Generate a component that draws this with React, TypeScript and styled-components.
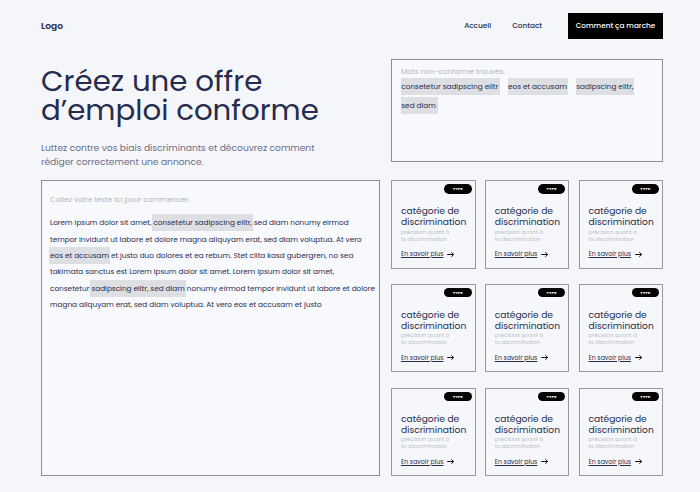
import React from 'react';
import styled, { createGlobalStyle } from 'styled-components';

const GlobalStyle = createGlobalStyle`
  *, *::before, *::after { box-sizing: border-box; }
  body {
    margin: 0;
    background: #f5f6fa;
    color: #262c4d;
    font-family: Poppins, Inter, 'Liberation Sans', sans-serif;
    font-feature-settings: 'cv11' 1;
    font-size: 7.32px;
  }
  h1, h2, p { margin: 0; font-weight: 400; }
`;

const Page = styled.div`
  width: 700px;
  height: 492px;
  padding: 13px 37px 0 41px;
  overflow: hidden;
`;

const Header = styled.header`
  display: flex;
  align-items: center;
  justify-content: space-between;
  height: 26px;
`;

const Logo = styled.div`
  font-size: 9.15px;
  font-weight: 600;
`;

const Nav = styled.nav`
  display: flex;
  align-items: center;
`;

const NavLink = styled.a<{ $gap: number }>`
  margin-right: ${(p) => p.$gap}px;
  font-weight: 500;
`;

const NavButton = styled.button`
  width: 95px;
  height: 26px;
  padding: 0;
  border: 0;
  background: #000;
  color: #fff;
  font: inherit;
  font-weight: 500;
`;

const Columns = styled.main`
  display: grid;
  grid-template-columns: 339px 272px;
  grid-template-rows: 121px 296px;
  column-gap: 11px;
  margin-top: 20px;
`;

const Intro = styled.section`
  padding-top: 6.5px;
`;

const Title = styled.h1`
  font-size: 29.25px;
  line-height: 29.5px;
`;

const Line = styled.span`
  display: block;
  white-space: pre;
`;

const Lead = styled.p`
  margin-top: 16px;
  color: #6b6f88;
  font-size: 9.14px;
  line-height: 14px;
`;

const Panel = styled.section`
  border: 1px solid #8d8e93;
  background: #f8f9fd;
`;

const Findings = styled(Panel)`
  height: 103px;
  padding: 7px 9px;
`;

const Hint = styled.p`
  color: #b2b4bf;
  line-height: 10px;
`;

const Chips = styled.div`
  display: flex;
  flex-wrap: wrap;
  gap: 2px 8px;
  margin-top: 1px;
`;

const Chip = styled.span<{ $width: number }>`
  width: ${(p) => p.$width}px;
  height: 17px;
  padding-left: 0.3px;
  background: #dedfe3;
  line-height: 17px;
  white-space: pre;
`;

const Editor = styled(Panel)`
  padding: 14px 0 0 8px;
`;

const Draft = styled.div`
  margin-top: 10.2px;
  line-height: 16.4px;
`;

const Mark = styled.mark`
  margin: 0 -1px;
  padding: 3px 1px;
  background: #dedfe3;
  color: inherit;
`;

const Cards = styled.section`
  display: grid;
  grid-template-columns: repeat(3, 84.5px);
  grid-template-rows: repeat(3, 88.5px);
  justify-content: space-between;
  align-content: space-between;
`;

const Card = styled.article`
  display: flex;
  flex-direction: column;
  padding: 3px 3px 0 9px;
  border: 1px solid #97989e;
  background: #f6f7fb;
`;

const Tag = styled.span`
  align-self: flex-end;
  width: 27.5px;
  height: 9.5px;
  border-radius: 5px;
  background: #000;
  color: #fff;
  font-size: 4.1px;
  font-weight: 700;
  line-height: 9.5px;
  text-align: center;
`;

const CardTitle = styled.h2`
  margin-top: 11.5px;
  font-size: 9.14px;
  line-height: 11px;
`;

const CardText = styled.p`
  margin-top: 1.5px;
  color: #bcbec8;
  font-size: 5.5px;
  line-height: 7px;
`;

const More = styled.a`
  display: flex;
  align-items: center;
  gap: 3.8px;
  margin-top: 6.5px;
  font-size: 6.25px;
  line-height: 10px;
  white-space: nowrap;
`;

const MoreLabel = styled.span`
  text-decoration: underline;
  text-decoration-thickness: 0.6px;
  text-underline-offset: 1px;
`;

const Arrow = () => (
  <svg width="8" height="7" viewBox="0 0 8 7" fill="none" stroke="#111" strokeWidth="1">
    <path d="M0.2 3.5H6.7M4.3 1.2L6.7 3.5L4.3 5.8" />
  </svg>
);

const chips = [
  { text: 'consetetur sadipscing elitr', width: 98.7 },
  { text: 'eos et accusam', width: 60.3 },
  { text: 'sadipscing elitr,', width: 58.5 },
  { text: 'sed diam', width: 37 },
];

export default function App() {
  return (
    <>
      <GlobalStyle />
      <Page>
        <Header>
          <Logo>Logo</Logo>
          <Nav>
            <NavLink $gap={21}>Accueil</NavLink>
            <NavLink $gap={26}>Contact</NavLink>
            <NavButton>Comment ça marche</NavButton>
          </Nav>
        </Header>
        <Columns>
          <Intro>
            <Title>
              <Line>Créez une offre</Line>
              <Line>d’emploi conforme</Line>
            </Title>
            <Lead>
              <Line>Luttez contre vos biais discriminants et découvrez comment</Line>
              <Line>rédiger correctement une annonce.</Line>
            </Lead>
          </Intro>
          <Findings>
            <Hint>Mots non-conforme trouvés:</Hint>
            <Chips>
              {chips.map((c) => (
                <Chip key={c.text} $width={c.width}>{c.text}</Chip>
              ))}
            </Chips>
          </Findings>
          <Editor>
            <Hint>Collez votre texte ici pour commencer.</Hint>
            <Draft>
              <Line>Lorem ipsum dolor sit amet, <Mark>consetetur sadipscing elitr,</Mark> sed diam nonumy eirmod</Line>
              <Line>tempor invidunt ut labore et dolore magna aliquyam erat, sed diam voluptua. At vero</Line>
              <Line><Mark>eos et accusam</Mark> et justo duo dolores et ea rebum. Stet clita kasd gubergren, no sea</Line>
              <Line>takimata sanctus est Lorem ipsum dolor sit amet. Lorem ipsum dolor sit amet,</Line>
              <Line>consetetur <Mark>sadipscing elitr, sed diam</Mark> nonumy eirmod tempor invidunt ut labore et dolore</Line>
              <Line>magna aliquyam erat, sed diam voluptua. At vero eos et accusam et justo</Line>
            </Draft>
          </Editor>
          <Cards>
            {Array.from({ length: 9 }, (_, i) => (
              <Card key={i}>
                <Tag>TYPE</Tag>
                <CardTitle>
                  <Line>catégorie de</Line>
                  <Line>discrimination</Line>
                </CardTitle>
                <CardText>
                  <Line>précision quant à</Line>
                  <Line>la discrimination</Line>
                </CardText>
                <More>
                  <MoreLabel>En savoir plus</MoreLabel>
                  <Arrow />
                </More>
              </Card>
            ))}
          </Cards>
        </Columns>
      </Page>
    </>
  );
}
